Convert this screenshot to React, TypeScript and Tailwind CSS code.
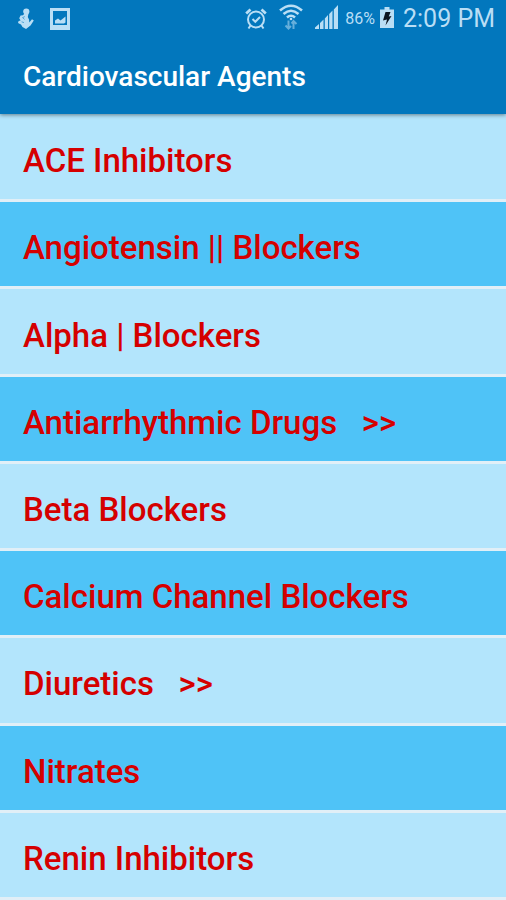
import React from "react";
import { clsx } from "clsx";

interface Category {
    name: string;
    hasChildren?: boolean;
}

const categories: Category[] = [
    { name: "ACE Inhibitors" },
    { name: "Angiotensin || Blockers" },
    { name: "Alpha | Blockers" },
    { name: "Antiarrhythmic Drugs", hasChildren: true },
    { name: "Beta Blockers" },
    { name: "Calcium Channel Blockers" },
    { name: "Diuretics", hasChildren: true },
    { name: "Nitrates" },
    { name: "Renin Inhibitors" },
];

function FigureIcon() {
    return (
        <svg viewBox="0 0 18 22" className="h-[22px] w-[18px]" fill="currentColor" aria-hidden="true">
            <circle cx="9.3" cy="3.6" r="3.1" />
            <path d="M7.5 5.5H11.5L10.8 9 12 11.5 12.3 14.5 15 11.3 16.8 12.5 13.5 17.5 9 21 5.5 19 4 16.5 1 15 1.6 13 3.6 12.6 2.2 10.2 3.6 7.6 6 7.2Z" />
            <path d="M7.8 8.6 5.6 9.6 7.6 11.4M4.6 13.8 7 14.6" fill="none" stroke="#0277bd" strokeWidth="0.8" opacity="0.7" />
        </svg>
    );
}

function PictureIcon() {
    return (
        <svg viewBox="0 0 20 22" className="h-[22px] w-5" fill="currentColor" aria-hidden="true">
            <path fillRule="evenodd" d="M0 0H20V22H0ZM3 3V17H17V3Z" />
            <path d="M5 15.5V12.5L8 10.5 10.5 12.5 15.5 8.5V14.5L14 15.5Z" />
        </svg>
    );
}

function AlarmIcon() {
    return (
        <svg viewBox="0 0 22 22" className="size-[22px]" fill="none" stroke="currentColor" strokeWidth="2" aria-hidden="true">
            <circle cx="11" cy="11.5" r="8" />
            <path d="M7.5 11 10.3 13.8 15 9" />
            <path d="M1.2 5.5 5.5 1.5M20.8 5.5 16.5 1.5" strokeWidth="2.8" />
            <path d="M5.5 17.5 3.5 20.5M16.5 17.5 18.5 20.5" />
        </svg>
    );
}

function WifiIcon() {
    return (
        <svg viewBox="0 0 24 26" className="h-[26px] w-6" fill="none" stroke="currentColor" aria-hidden="true">
            <path d="M1 6.5Q12-3 23 6.5M4.5 10Q12 3.5 19.5 10M8 13.5Q12 10 16 13.5" strokeWidth="2.6" />
            <circle cx="12" cy="15" r="1.3" fill="currentColor" stroke="none" />
            <g strokeWidth="2" opacity="0.55">
                <path d="M9.5 16.5V24M6.5 21.5 9.5 24.5 12 22" />
                <path d="M14.5 25V17.5M12.5 19.5 14.5 17 17.5 20" />
            </g>
        </svg>
    );
}

function SignalIcon() {
    return (
        <svg viewBox="0 0 23 24" className="h-6 w-[23px]" fill="currentColor" aria-hidden="true">
            <path d="M0 24V22.5L4 19V24ZM5 24V18L8.5 14.5V24ZM9.8 24V13.5L13 10V24ZM14.2 24V9L17.5 5.5V24ZM18.8 24V4.5L23 0V24Z" />
        </svg>
    );
}

function BatteryIcon() {
    return (
        <svg viewBox="0 0 14 21" className="h-[21px] w-3.5" aria-hidden="true">
            <path d="M4.5 0H9.5V2.5H14V21H0V2.5H4.5Z" fill="currentColor" />
            <path d="M5.5 5H10.5L8.8 9.5 11.5 9 5.5 18.5 7 12.5 3 13.5Z" fill="#0b1420" />
        </svg>
    );
}

function StatusBar() {
    return (
        <div className="flex h-[38px] items-center justify-between pr-[11px] pl-[17px] text-[#b9def5]">
            <div className="flex items-center gap-[15px]">
                <FigureIcon />
                <PictureIcon />
            </div>
            <div className="flex items-center">
                <AlarmIcon />
                <span className="ml-3 flex pb-1">
                    <WifiIcon />
                </span>
                <span className="ml-3 flex pb-1">
                    <SignalIcon />
                </span>
                <span className="ml-[7px] text-base">86%</span>
                <span className="ml-[5px] flex pb-1">
                    <BatteryIcon />
                </span>
                <time className="ml-[9px] text-[25px] leading-8">2:09 PM</time>
            </div>
        </div>
    );
}

function CategoryRow({ name, hasChildren = false, shaded }: Category & { shaded: boolean }) {
    return (
        <li className={clsx("flex border-b-[3px] border-[#e1eff7]", shaded ? "bg-[#4fc3f7]" : "bg-[#b3e5fc]")}>
            <button type="button" className="flex w-full items-center px-[23px] pt-2 text-left">
                <span className="text-[33px] leading-10 font-medium whitespace-pre text-[#d50000]">
                    {name}
                    {hasChildren && "   >>"}
                </span>
            </button>
        </li>
    );
}

export default function App() {
    return (
        <div className="flex min-h-screen flex-col bg-[#b3e5fc] font-[Roboto,sans-serif]">
            <header className="z-10 bg-[#0277bd] shadow-[0_1px_4px_rgba(0,0,0,0.45)]">
                <StatusBar />
                <h1 className="flex h-[76px] items-center px-[23px] pt-0.5 text-[28px] font-medium text-white">
                    Cardiovascular Agents
                </h1>
            </header>
            <ul className="grid flex-1 auto-rows-fr pt-px">
                {categories.map((category, i) => (
                    <CategoryRow key={category.name} {...category} shaded={i % 2 === 1} />
                ))}
            </ul>
        </div>
    );
}
